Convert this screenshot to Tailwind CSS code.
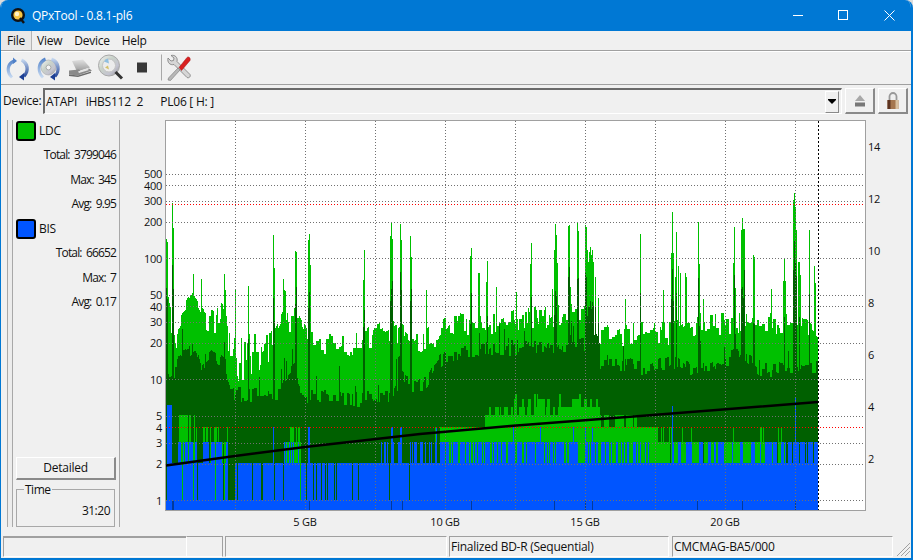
<!DOCTYPE html>
<html lang="en">
<head>
<meta charset="UTF-8">
<title>QPxTool</title>
<script src="https://cdn.jsdelivr.net/npm/@tailwindcss/browser@4"></script>
</head>
<body class="w-[913px] h-[560px] overflow-hidden bg-[#dcdcdc] font-['Open_Sans',sans-serif] text-[12px] tracking-[-0.25px] text-[#101010]">
<div class="w-[913px] h-[560px] flex flex-col rounded-t-[8px] overflow-hidden border-l border-r-2 border-b-2 border-[#0078d4] bg-[#f0f0f0]">

  <!-- Title bar -->
  <div class="h-[31px] shrink-0 bg-[#0078d4] flex items-center text-white text-[12px]">
    <svg class="ml-[9px] w-[17px] h-[17px]" viewBox="0 0 17 17">
      <circle cx="8" cy="8" r="7" fill="#111"/>
      <circle cx="8" cy="8" r="4.6" fill="#f6c544"/>
      <circle cx="7" cy="7" r="2.2" fill="#fff3c8"/>
      <path d="M10 11l4 5" stroke="#111" stroke-width="2.4"/>
    </svg>
    <span class="ml-[5px]">QPxTool - 0.8.1-pl6</span>
    <svg class="ml-auto mr-[16px] w-[112px] h-[31px]" viewBox="0 0 112 31" fill="none" stroke="#fff" stroke-width="1">
      <path d="M10 15.5h10"/>
      <rect x="55.5" y="10.5" width="9" height="9"/>
      <path d="M101.5 10.5l10 10M111.5 10.5l-10 10"/>
    </svg>
  </div>

  <!-- Menu -->
  <div class="h-[19px] shrink-0 flex items-center text-[#111]">
    <span class="h-[19px] w-[31px] flex items-center justify-center bg-[#e8e8e8] border-r border-[#b5b5b5]">File</span>
    <span class="ml-[5px]">View</span>
    <span class="ml-[12px]">Device</span>
    <span class="ml-[12px]">Help</span>
  </div>

  <!-- Toolbar -->
  <div class="h-[35px] shrink-0 flex items-center border-t border-[#a0a0a0] border-b shadow-[inset_0_1px_0_#fff]">
    <svg class="w-[194px] h-[33px]" viewBox="1 51.500 194 33">
      <defs>
        <linearGradient id="arcL" x1="0" y1="0" x2="0" y2="1"><stop offset="0" stop-color="#4f80c8"/><stop offset="1" stop-color="#cfe0f4"/></linearGradient>
        <linearGradient id="arcR" x1="0" y1="0" x2="0" y2="1"><stop offset="0" stop-color="#cfe0f4"/><stop offset="1" stop-color="#1d3f94"/></linearGradient>
        <linearGradient id="cd" x1="0" y1="0" x2="1" y2="1"><stop offset="0" stop-color="#f4f4f4"/><stop offset="0.4" stop-color="#c9d2c9"/><stop offset="0.7" stop-color="#c4c4d0"/><stop offset="1" stop-color="#949494"/></linearGradient>
        <linearGradient id="metal" x1="0" y1="0" x2="0" y2="1"><stop offset="0" stop-color="#e2e2e2"/><stop offset="1" stop-color="#9a9a9a"/></linearGradient>
      </defs>
      <!-- refresh -->
      <path d="M14 60C6 62 4 73 11 79L13 77C8 72 9 65 15 63Z" fill="url(#arcL)"/>
      <path d="M13 58l4 3.500-4 3z" fill="#4f80c8"/>
      <path d="M22 59C30 62 31 72 25 78L23 75.500C27 71 26 65 21 62Z" fill="url(#arcR)"/>
      <path d="M24 81l-5-3.500 5-4z" fill="#1d3f94"/>
      <!-- reload disc -->
      <circle cx="48.500" cy="68" r="7.500" fill="url(#cd)" stroke="#a8a8a8" stroke-width=".6"/>
      <circle cx="48.500" cy="68" r="2.400" fill="#f4f4f4" stroke="#888" stroke-width=".6"/>
      <path d="M45 58C37 61 35 72 42 79L44 77C39 72 39 65 46 61Z" fill="url(#arcL)"/>
      <path d="M52 58C61 61 62 72 56 78L54 76C58 71 57 65 51 61Z" fill="url(#arcR)"/>
      <path d="M55 81l-5-3.500 5-4z" fill="#1d3f94"/>
      <!-- drive -->
      <path d="M72 61.500l11-1.500 7 8-13 4z" fill="url(#metal)"/>
      <path d="M69 71l10-1 2 2 8-3 3 2-14 5-9-1z" fill="#8a8a8a"/>
      <path d="M78 72l9-3 2 1.500-10 3z" fill="#e4e4e4"/>
      <path d="M69 75l9 1 13-4v1.500l-13 4-9-1z" fill="#6a6a6a"/>
      <!-- scan -->
      <circle cx="109" cy="66" r="10.500" fill="url(#cd)" stroke="#a8a8a8"/>
      <circle cx="109" cy="66" r="6.500" fill="#ececec" stroke="#c4c4c4"/>
      <path d="M104 62a7 7 0 014-3l1 5z" fill="#8fbfe0"/>
      <path d="M105 68l3-2 1 4z" fill="#d3c06a"/>
      <path d="M115.500 72.500l6.500 6.500" stroke="#333" stroke-width="3"/>
      <!-- stop -->
      <rect x="137" y="63" width="10" height="10" fill="#383838"/>
      <!-- sep -->
      <path d="M161.500 55v26" stroke="#a8a8a8"/>
      <!-- tools -->
      <path d="M168 58.500l3 3 2.500-.5.500-2.500-3-2.500c4-1 7 2 6 6l13 13c1 2-1 4-3 3l-13-13c-4 1-7-2-6-6.500z" fill="#d6d6d6" stroke="#7a7a7a" stroke-width=".8"/>
      <path d="M168.500 78.500l9.500-10 2 2-9.500 10.500-2.500-.5z" fill="#b8b8b8" stroke="#777" stroke-width=".6"/>
      <path d="M179 68l8-10c1.500-1.500 4 .5 3 3l-8.500 10z" fill="#d92020" stroke="#a01010" stroke-width=".5"/>
    </svg>
  </div>

  <!-- Device row -->
  <div class="h-[30px] shrink-0 flex items-start pt-[3px]">
    <span class="ml-[2px] w-[40px] h-[26px] flex items-center">Device:</span>
    <div class="w-[799px] h-[26px] flex items-center border-t-2 border-l-2 border-[#6a6a6a] border-b border-r border-b-white border-r-white pl-[1px]">
      <span class="whitespace-pre">ATAPI   iHBS112  2      PL06 [ H: ]</span>
      <span class="ml-auto mr-[2px] w-[14px] h-[22px] bg-[#f0f0f0] border-l border-t border-white border-r border-b border-r-[#8a8a8a] border-b-[#8a8a8a] flex items-center justify-center">
        <svg class="w-[8px] h-[6px]" viewBox="0 0 8 6"><path d="M0 0h8v1L4 5 0 1z" fill="#000"/></svg>
      </span>
    </div>
    <div class="ml-[3px] w-[30px] h-[26px] flex items-center justify-center bg-[#f0f0f0] border border-white border-r-2 border-b-2 border-r-[#8a8a8a] border-b-[#8a8a8a]">
      <svg class="w-[12px] h-[12px]" viewBox="0 0 12 12"><path d="M6 0l5 6H1z" fill="#a8a8a8"/><rect x="1" y="7.500" width="10" height="4" fill="#777"/></svg>
    </div>
    <div class="ml-[3px] w-[30px] h-[26px] flex items-center justify-center bg-[#f0f0f0] border border-white border-r-2 border-b-2 border-r-[#8a8a8a] border-b-[#8a8a8a]">
      <svg class="w-[14px] h-[18px]" viewBox="0 0 14 18"><path d="M3.500 8V4.500a3.500 3.500 0 017 0V8" fill="none" stroke="#999" stroke-width="1.800"/><rect x="1.500" y="8" width="11" height="9" fill="#a5764e"/><rect x="1.500" y="8" width="3" height="9" fill="#5d3421"/><rect x="9.500" y="8" width="3" height="9" fill="#d8c0a0"/></svg>
    </div>
  </div>

  <!-- Main -->
  <div class="h-[415px] shrink-0 flex">
    <div class="ml-[6px] mt-[5px] mb-[3px] w-[6px] shrink-0 border-x border-[#a8a8a8] bg-[#ececec]"></div>
    <div class="mt-[5px] mb-[3px] w-[107px] shrink-0 border-r border-[#a8a8a8] pl-[3px] flex flex-col">
      <div class="h-[24px] -mt-[1px] flex items-center">
        <span class="w-[20px] h-[20px] rounded-[3px] border-2 border-black bg-[#00c000]"></span><span class="ml-[3px]">LDC</span>
      </div>
      <div class="h-[24.500px] flex items-center justify-end pr-[3px] tracking-[-0.85px] [word-spacing:2px]">Total: 3799046</div>
      <div class="h-[24.500px] flex items-center justify-end pr-[3px] tracking-[-0.85px] [word-spacing:2px]">Max: 345</div>
      <div class="h-[24.500px] flex items-center justify-end pr-[3px] tracking-[-0.85px] [word-spacing:2px]">Avg: 9.95</div>
      <div class="h-[24.500px] flex items-center">
        <span class="w-[20px] h-[20px] rounded-[3px] border-2 border-black bg-[#0055ff]"></span><span class="ml-[3px]">BIS</span>
      </div>
      <div class="h-[24.500px] flex items-center justify-end pr-[3px] tracking-[-0.85px] [word-spacing:2px]">Total: 66652</div>
      <div class="h-[24.500px] flex items-center justify-end pr-[3px] tracking-[-0.85px] [word-spacing:2px]">Max: 7</div>
      <div class="h-[24.500px] flex items-center justify-end pr-[3px] tracking-[-0.85px] [word-spacing:2px]">Avg: 0.17</div>
      <div class="mt-auto w-[100px] h-[23px] flex items-center justify-center border border-white border-r-2 border-b-2 border-r-[#8a8a8a] border-b-[#8a8a8a]">Detailed</div>
      <div class="relative mt-[9px] w-[99px] h-[38px] border border-[#a8a8a8] flex items-end justify-end pr-[4px] pb-[6px] tracking-[-0.5px]">
        <span class="absolute left-[7px] top-[-9px] bg-[#f0f0f0] px-[1px]">Time</span>
        31:20
      </div>
    </div>
    <svg id="chart" class="w-[793px] h-[415px] shrink-0 font-['Open_Sans',sans-serif] text-[11px]" viewBox="120 115 793 415">
      <rect x="165.500" y="120.500" width="700" height="390" fill="#fff" stroke="#a0a0a0"/>
      <path id="lLight" fill="#00c000" shape-rendering="crispEdges"/>
      <path id="lDark" fill="#006000" shape-rendering="crispEdges"/>
      <path id="lLow" fill="#00c000" shape-rendering="crispEdges"/>
      <path id="lBlue" fill="#0055ff" shape-rendering="crispEdges"/>
      <path id="lTick" fill="#003a9c" shape-rendering="crispEdges"/>
      <path id="gridH" fill="none" stroke="#707070" stroke-dasharray="1 2" shape-rendering="crispEdges"/>
      <path id="gridV" fill="none" stroke="#707070" stroke-dasharray="1 2" shape-rendering="crispEdges"/>
      <path d="M166 204.500H865M166 427.500H865" fill="none" stroke="#ff0000" stroke-dasharray="1 2" shape-rendering="crispEdges"/>
      <path d="M818.500 121V510" fill="none" stroke="#000" stroke-dasharray="2 2" shape-rendering="crispEdges"/>
      <path d="M166 465.500L235 456 305 447 376 439 420 434 510 426 640 416 818 402" fill="none" stroke="#000" stroke-width="2.500"/>
      <g fill="#111" text-anchor="end">
        <text x="162" y="177.500">500</text><text x="162" y="189.500">400</text><text x="162" y="204.500">300</text><text x="162" y="225.500">200</text>
        <text x="162" y="262.500">100</text><text x="162" y="298.500">50</text><text x="162" y="310.500">40</text><text x="162" y="325.500">30</text>
        <text x="162" y="346.500">20</text><text x="162" y="383.500">10</text><text x="162" y="419.500">5</text><text x="162" y="431.500">4</text>
        <text x="162" y="446.500">3</text><text x="162" y="467.500">2</text><text x="162" y="504.500">1</text>
      </g>
      <g fill="#111">
        <text x="868" y="151">14</text><text x="868" y="203">12</text><text x="868" y="255">10</text><text x="868" y="307">8</text>
        <text x="868" y="359">6</text><text x="868" y="411">4</text><text x="868" y="463">2</text>
      </g>
      <g fill="#111" text-anchor="middle">
        <text x="305" y="526">5 GB</text><text x="445" y="526">10 GB</text><text x="585" y="526">15 GB</text><text x="725" y="526">20 GB</text>
      </g>
    </svg>
  </div>

  <!-- Status bar -->
  <div class="h-[27px] shrink-0 flex items-start pt-[6px] relative">
    <div class="ml-[2px] w-[183px] h-[21px] border-t-2 border-l border-[#a0a0a0] border-b border-b-white"></div>
    <div class="w-[37px] h-[21px] border-t border-r border-[#a0a0a0] border-l border-l-white border-b border-b-white"></div>
    <div class="ml-[2px] w-[222px] h-[21px] border-t border-l border-[#a0a0a0] border-b border-b-white border-r border-r-white"></div>
    <div class="ml-[2px] w-[220px] h-[21px] border-t border-l border-[#a0a0a0] border-b border-b-white border-r border-r-white flex items-center pl-[1px]">Finalized BD-R (Sequential)</div>
    <div class="ml-[3px] w-[221px] h-[21px] border-t border-l border-[#a0a0a0] border-b border-b-white border-r border-r-white flex items-center pl-[1px]">CMCMAG-BA5/000</div>
    <svg class="absolute right-[1px] bottom-[1px] w-[13px] h-[13px]" viewBox="0 0 13 13" stroke="#a0a0a0"><path d="M0 13L13 0M4 13l9-9M8 13l5-5"/></svg>
  </div>
</div>

<script>
// seeded noise so the trace is the same on every load
var seed = 7341;
function rnd() { seed = (seed * 16807) % 2147483647; return (seed - 1) / 2147483646; }
function interp(keys, x) {
  for (var i = 1; i < keys.length; i++) {
    if (x <= keys[i][0]) {
      var a = keys[i - 1], b = keys[i];
      return a[1] + (b[1] - a[1]) * (x - a[0]) / (b[0] - a[0]);
    }
  }
  return keys[keys.length - 1][1];
}
function within(ranges, x) { return ranges.some(function (r) { return x >= r[0] && x <= r[1]; }); }

var topKeys = [[166,300],[176,340],[178,312],[193,292],[200,305],[225,315],[228,345],[270,342],[283,315],[298,315],[310,335],[360,338],[400,328],[412,340],[430,335],[450,320],[490,320],[520,315],[585,310],[600,332],[640,330],[670,330],[700,320],[800,320],[818,330]];
var darkKeys = [[166,372],[176,372],[178,355],[195,345],[200,365],[210,355],[225,365],[230,395],[280,395],[285,378],[296,368],[300,395],[360,400],[390,395],[400,378],[410,385],[427,383],[432,373],[445,355],[470,352],[520,347],[585,345],[588,300],[597,310],[600,362],[650,368],[670,360],[690,370],[740,355],[760,370],[818,368]];
var spikes = [[166,239],[167,242],[172,203],[173,228],[193,274],[201,279],[224,274],[225,290],[235,290],[248,286],[273,235],[274,268],[283,279],[284,290],[285,291],[295,251],[296,252],[308,240],[309,234],[310,265],[364,250],[363,280],[390,236],[391,223],[392,239],[400,224],[401,240],[410,236],[411,257],[426,290],[470,256],[471,248],[478,273],[479,273],[486,282],[487,261],[496,287],[516,292],[530,264],[531,243],[552,289],[554,250],[555,224],[556,235],[557,263],[568,226],[569,225],[570,287],[577,222],[578,231],[585,225],[586,227],[587,250],[588,262],[589,252],[590,247],[591,255],[592,250],[593,262],[595,277],[598,298],[625,299],[640,234],[663,290],[671,253],[672,212],[673,253],[675,277],[676,232],[678,266],[680,273],[685,273],[686,277],[698,222],[699,264],[703,299],[733,263],[734,227],[735,288],[741,230],[742,218],[743,229],[744,229],[753,255],[754,257],[771,289],[783,281],[784,258],[785,281],[793,200],[794,193],[795,207],[796,230],[798,262],[799,262],[800,275],[809,230],[814,266],[815,283]];
var spikeAt = {};
spikes.forEach(function (s) { spikeAt[s[0]] = s[1]; });
var blueThin = [273,308,309,391,392,400,401,672,795,436,513,540,573,585,592];
var blueMid = [[178,196],[203,227],[284,300]];
var tickAt = [172,173,309,391,402,471,554,585,592,697,742,795];

var light = '', dark = '', low = '', blue = '', tick = '';
function col(x, y, bottom) { return 'M' + x + ' ' + Math.round(y) + 'V' + bottom + 'H' + (x + 1) + 'V' + Math.round(y) + 'Z'; }

// stepped top of the light patch under the dark band, mid disc
function patchTop(x) {
  if (x < 483) return 427;
  if (x < 507) return rnd() < 0.5 ? 407 : 415;
  if (x < 600) return rnd() < 0.35 ? 407 : rnd() < 0.7 ? 399 : rnd() < 0.5 ? 394 : 415;
  if (x < 640) return rnd() < 0.6 ? 415 : 427;
  return 427;
}

var heldTop = 0, heldDark = 0, hold = 0, heldPatch = 427, heldBlue = false, heldLow = 442, run = 0;
for (var x = 166; x < 818; x++) {
  if (hold-- <= 0) {
    var spread = x < 280 ? 38 : x < 400 ? 30 : 24;
    heldTop = rnd() * spread - spread * 0.35;
    heldDark = rnd() * 16 - 8;
    heldPatch = patchTop(x);
    hold = Math.floor(rnd() * 3);
  }
  var t = interp(topKeys, x) + heldTop;
  if (x > 232 && x < 270 && rnd() < 0.2) t += 18;
  var d = interp(darkKeys, x) + heldDark;
  if (spikeAt[x]) {
    t = spikeAt[x];
    if (spikeAt[x] < 262 || rnd() < 0.3) d = Math.min(d, spikeAt[x] + 42 + rnd() * 28);
  }
  if (rnd() < 0.05) d -= 14 + rnd() * 14;
  light += col(x, t, 510);
  dark += col(x, Math.max(d, t), 510);

  // lower bands: light up to lowTop, blue up to blueTop
  var lowTop = 510, blueTop = 463;
  if (x < 410) {
    if (within(blueMid, x)) {
      var r = rnd();
      lowTop = r < 0.55 ? (x > 300 || x < 196 ? 415 : 427) : 442;
      if (x > 203 && x < 227 && rnd() < 0.4) lowTop = 510;
      blueTop = rnd() < 0.7 ? 442 : 463;
    }
    if (x > 377 && x < 403 && rnd() < 0.3) blueTop = 442;
    var gap = x < 228 ? 0.08 : x < 300 ? 0.06 : x < 362 ? 0.25 : 0.04;
    if (blueTop === 463 && rnd() < gap) blueTop = 500;
    if (x >= 228 && x <= 234) blueTop = 500;
    if (x >= 167 && x <= 173) { blueTop = x < 172 ? 405 : 463; }
    if (x === 166) blueTop = 500;
  } else if (x < 650) {
    lowTop = heldPatch;
    if (x < 433) lowTop = 442;
    blueTop = 442;
    var m = x < 440 ? 0.65 : x < 600 ? 0.28 : 0.5;
    if (rnd() < m) {
      blueTop = 463;
      if (x < 440) lowTop = 510;
    }
    if (x >= 579 && x <= 584) blueTop = 463;
  } else {
    // right part of the disc: runs of blue, light and dark in the 2..3 band
    if (run-- <= 0) {
      heldBlue = rnd() < 0.38;
      heldLow = rnd() < 0.85 ? 442 : 510;
      run = Math.floor(rnd() * 4);
    }
    lowTop = heldLow;
    blueTop = heldBlue ? 442 : 463;
    if (x < 658) lowTop = 427;
    else if (rnd() < 0.1) lowTop = 427;
    if (x > 785) { blueTop = rnd() < 0.8 ? 442 : 463; lowTop = 510; }
  }
  if (blueThin.indexOf(x) >= 0) blueTop = x === 795 ? 398 : x === 672 ? 406 : 427;
  if (lowTop < 510) low += col(x, lowTop, 510);
  blue += col(x, blueTop, 510);
}
tickAt.forEach(function (x) { tick += col(x, 501, 510); });
document.getElementById('lLight').setAttribute('d', light);
document.getElementById('lDark').setAttribute('d', dark);
document.getElementById('lLow').setAttribute('d', low);
document.getElementById('lBlue').setAttribute('d', blue);
document.getElementById('lTick').setAttribute('d', tick);

var gridH = '';
[500,400,300,200,100,50,40,30,20,10,5,4,3,2,1].forEach(function (v) {
  gridH += 'M166 ' + (Math.round(500.3 - 121 * Math.log10(v)) + 0.5) + 'H865';
});
document.getElementById('gridH').setAttribute('d', gridH);
var gridV = '';
for (var g = 235; g < 800; g += 70) gridV += 'M' + (g + 0.5) + ' 121V510';
document.getElementById('gridV').setAttribute('d', gridV);
</script>
</body>
</html>
